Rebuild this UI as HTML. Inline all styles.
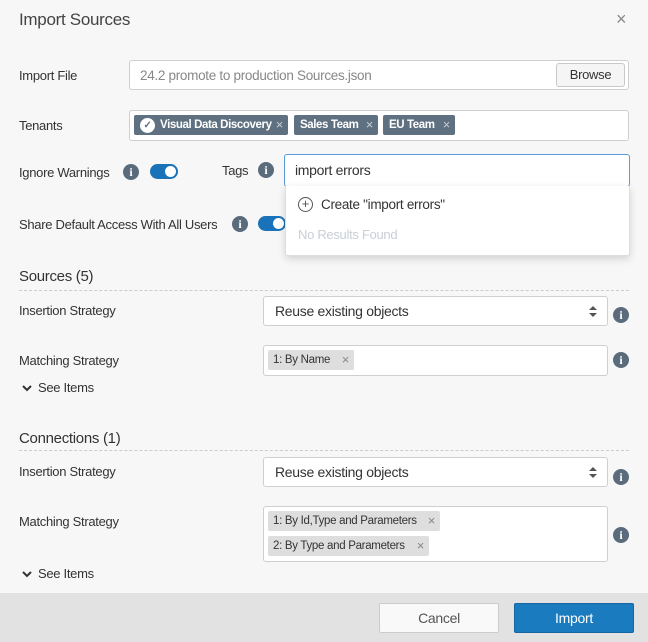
<!DOCTYPE html>
<html><head><meta charset="utf-8"><style>
*{box-sizing:border-box;margin:0;padding:0}
body{width:648px;height:642px;background:#f7f7f7;font-family:"Liberation Sans",sans-serif;color:#333;position:relative;overflow:hidden;font-size:13px;letter-spacing:-0.3px}
.a{position:absolute}
.lbl{position:absolute;left:19px;font-size:13px;color:#333;line-height:16px}
.box{position:absolute;background:#fff;border:1px solid #cfcfcf;border-radius:3px}
.info{position:absolute;width:16px;height:16px;border-radius:50%;background:#5a6b7b;color:#fff;font:bold 12px/16px "Liberation Serif",serif;text-align:center;letter-spacing:0}
.chip{position:absolute;height:20px;background:#5f7080;color:#fff;font-weight:bold;font-size:11.5px;line-height:20px;border-radius:2px;padding-left:6px;letter-spacing:-0.4px;white-space:nowrap;overflow:hidden}
.chip .x{position:absolute;right:5px;top:0;color:#c5ccd3;font-weight:normal;font-size:13px}
.gchip{position:absolute;height:20px;background:#dedede;color:#333;font-size:11.5px;line-height:20px;border-radius:2px;padding-left:5px;letter-spacing:-0.3px;white-space:nowrap}
.gchip .x{position:absolute;right:5px;top:0;color:#888;font-size:13px}
.tog{position:absolute;width:28px;height:15px;border-radius:8px;background:#1a73b8}
.tog:after{content:"";position:absolute;right:2px;top:2px;width:11px;height:11px;border-radius:50%;background:#fff}
.sel{position:absolute;left:263px;width:345px;height:30px;background:#fff;border:1px solid #cfcfcf;border-radius:3px;font-size:14px;line-height:28px;padding-left:11px;color:#333}
.arr{position:absolute;right:10px;top:8px;width:8px;height:13px}
.sec{position:absolute;left:19px;font-size:15px;color:#333}
.dash{position:absolute;left:19px;width:610px;border-top:1px dashed #ccc}
.see{position:absolute;left:22px;font-size:13px;color:#333}
</style></head><body>
<div class="a" style="left:19px;top:10px;font-size:17px;color:#444">Import Sources</div>
<div class="a" style="left:616px;top:9px;font-size:18px;color:#888">×</div>

<div class="lbl" style="top:68px">Import File</div>
<div class="box" style="left:129px;top:60px;width:500px;height:30px"></div>
<div class="a" style="left:140px;top:68px;font-size:13.5px;color:#888">24.2 promote to production Sources.json</div>
<div class="a" style="left:556px;top:63px;width:69px;height:24px;background:#f5f5f5;border:1px solid #c8c8c8;border-radius:3px;font-size:13px;line-height:22px;text-align:center">Browse</div>

<div class="lbl" style="top:118px">Tenants</div>
<div class="box" style="left:129px;top:110px;width:500px;height:31px"></div>
<div class="chip" style="left:134px;top:115px;width:154px;padding-left:26px"><span class="a" style="left:6px;top:3px;width:15px;height:15px;border-radius:50%;background:#fff;color:#5f7080;font-size:10px;line-height:15px;text-align:center">✓</span>Visual Data Discovery<span class="x">×</span></div>
<div class="chip" style="left:294px;top:115px;width:84px">Sales Team<span class="x">×</span></div>
<div class="chip" style="left:383px;top:115px;width:72px">EU Team<span class="x">×</span></div>

<div class="lbl" style="top:165px">Ignore Warnings</div>
<div class="info" style="left:123px;top:164px">i</div>
<div class="tog" style="left:150px;top:164px"></div>
<div class="a" style="left:222px;top:163px;font-size:13px">Tags</div>
<div class="info" style="left:258px;top:162px">i</div>

<div class="lbl" style="top:217px">Share Default Access With All Users</div>
<div class="info" style="left:232px;top:216px">i</div>
<div class="tog" style="left:258px;top:216px"></div>

<div class="a" style="left:284px;top:154px;width:346px;height:33px;background:#fff;border:1px solid #5b9bd5;border-radius:3px;font-size:14px;line-height:31px;padding-left:10px">import errors</div>
<div class="a" style="left:285px;top:186px;width:345px;height:70px;background:#fff;border:1px solid #ddd;border-top:none;border-radius:0 0 3px 3px;box-shadow:0 3px 8px rgba(0,0,0,0.15)">
<div class="a" style="left:12px;top:11px;width:15px;height:15px;border:1.5px solid #555;border-radius:50%;font-size:13px;line-height:11px;text-align:center;color:#555;letter-spacing:0">+</div>
<div class="a" style="left:35px;top:11px;font-size:13.5px">Create "import errors"</div>
<div class="a" style="left:12px;top:41px;font-size:13px;color:#c8cfd6">No Results Found</div>
</div>

<div class="sec" style="top:268px">Sources (5)</div>
<div class="dash" style="top:290px"></div>
<div class="lbl" style="top:303px">Insertion Strategy</div>
<div class="sel" style="top:296px">Reuse existing objects<svg class="arr" viewBox="0 0 8 13"><path d="M0 5L4 1L8 5Z M0 8L4 12L8 8Z" fill="#555"/></svg></div>
<div class="info" style="left:613px;top:307px">i</div>
<div class="lbl" style="top:353px">Matching Strategy</div>
<div class="box" style="left:263px;top:345px;width:345px;height:31px"></div>
<div class="gchip" style="left:268px;top:350px;width:86px">1: By Name<span class="x">×</span></div>
<div class="info" style="left:613px;top:352px">i</div>
<div class="see" style="top:380px"><svg width="10" height="8" style="margin-right:6px" viewBox="0 0 10 8"><path d="M1 2L5 6L9 2" stroke="#333" stroke-width="2" fill="none"/></svg>See Items</div>

<div class="sec" style="top:430px">Connections (1)</div>
<div class="dash" style="top:450px"></div>
<div class="lbl" style="top:464px">Insertion Strategy</div>
<div class="sel" style="top:457px">Reuse existing objects<svg class="arr" viewBox="0 0 8 13"><path d="M0 5L4 1L8 5Z M0 8L4 12L8 8Z" fill="#555"/></svg></div>
<div class="info" style="left:613px;top:469px">i</div>
<div class="lbl" style="top:514px">Matching Strategy</div>
<div class="box" style="left:263px;top:506px;width:345px;height:56px"></div>
<div class="gchip" style="left:268px;top:511px;width:172px">1: By Id,Type and Parameters<span class="x">×</span></div>
<div class="gchip" style="left:268px;top:536px;width:161px">2: By Type and Parameters<span class="x">×</span></div>
<div class="info" style="left:613px;top:527px">i</div>
<div class="see" style="top:566px"><svg width="10" height="8" style="margin-right:6px" viewBox="0 0 10 8"><path d="M1 2L5 6L9 2" stroke="#333" stroke-width="2" fill="none"/></svg>See Items</div>

<div class="a" style="left:0;top:593px;width:648px;height:49px;background:#e2e2e2"></div>
<div class="a" style="left:379px;top:603px;width:120px;height:30px;background:#f9f9f9;border:1px solid #ccc;border-radius:2px;font-size:14px;line-height:28px;text-align:center;color:#555">Cancel</div>
<div class="a" style="left:514px;top:603px;width:120px;height:30px;background:#1a7bbf;border:1px solid #1467a3;border-radius:2px;font-size:14px;line-height:28px;text-align:center;color:#fff">Import</div>
</body></html>
